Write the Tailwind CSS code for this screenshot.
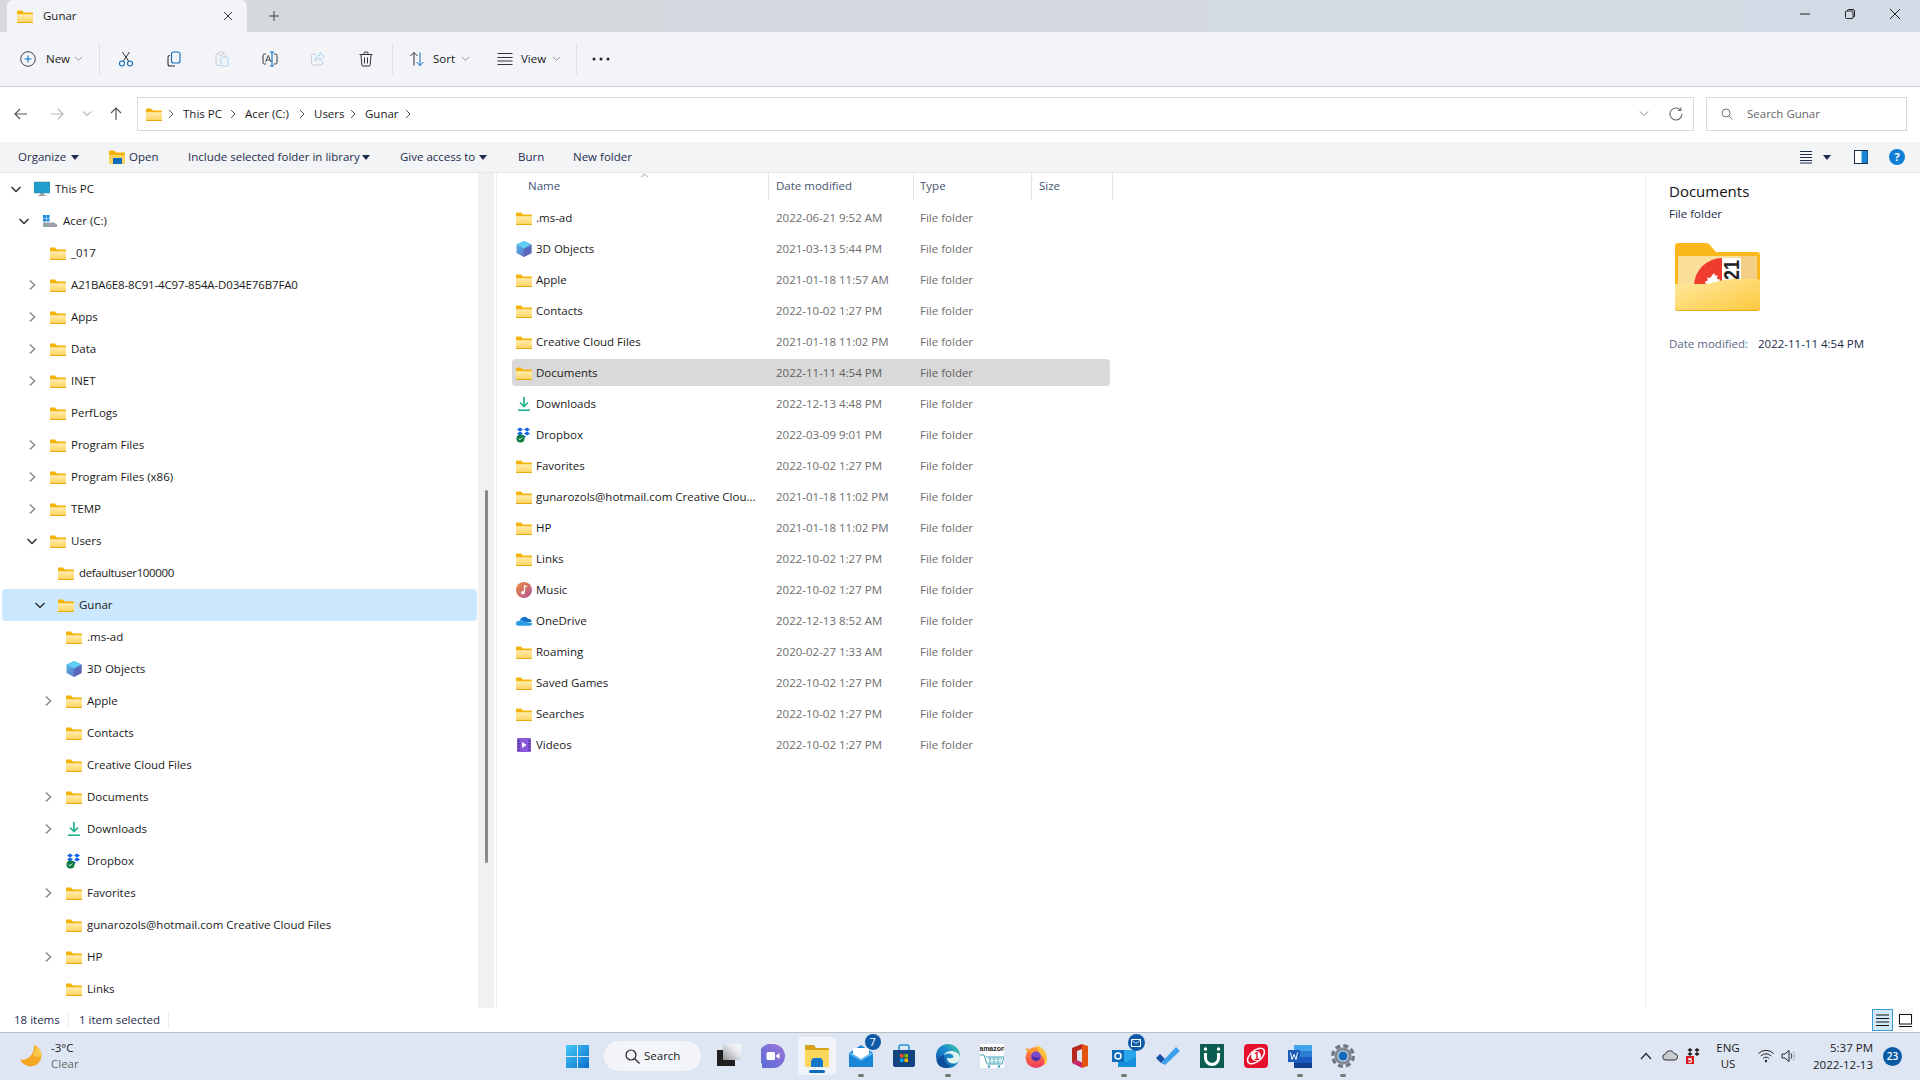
<!DOCTYPE html>
<html lang="en">
<head>
    <meta charset="UTF-8">
    <title>Gunar - File Explorer</title>
    <script src="https://cdn.jsdelivr.net/npm/@tailwindcss/browser@4"></script>
</head>
<body class="m-0 overflow-hidden bg-white">
<svg class="absolute w-0 h-0">
    <defs>
        <linearGradient id="fbody" x1="0" y1="0" x2="0" y2="1"><stop offset="0" stop-color="#ffedb0"/><stop offset="1" stop-color="#fdd35f"/></linearGradient>
        <linearGradient id="cubeg" x1="0" y1="0" x2="1" y2="1"><stop offset="0" stop-color="#4fc0ee"/><stop offset="1" stop-color="#6a5bb8"/></linearGradient>
        <linearGradient id="musicg" x1="0" y1="0" x2="1" y2="1"><stop offset="0" stop-color="#f08a3c"/><stop offset="1" stop-color="#b0569c"/></linearGradient>
        <linearGradient id="wing" x1="0" y1="0" x2="1" y2="1"><stop offset="0" stop-color="#45c8f5"/><stop offset="1" stop-color="#0a6fd0"/></linearGradient>
        <linearGradient id="edgeg" x1="0" y1="1" x2="1" y2="0"><stop offset="0" stop-color="#0c4f9c"/><stop offset=".6" stop-color="#1b8fd0"/><stop offset="1" stop-color="#4fd08a"/></linearGradient>
        <linearGradient id="foxg" x1="0" y1="0" x2="0" y2="1"><stop offset="0" stop-color="#ff9a2e"/><stop offset="1" stop-color="#f2365e"/></linearGradient>
        <linearGradient id="chatg" x1="0" y1="1" x2="1" y2="0"><stop offset="0" stop-color="#5468d8"/><stop offset="1" stop-color="#a077d6"/></linearGradient>
        <linearGradient id="tviewg" x1="0" y1="1" x2="1" y2="0"><stop offset="0" stop-color="#8f9298"/><stop offset=".6" stop-color="#e4e6ea"/><stop offset="1" stop-color="#fafbfd"/></linearGradient>
        <linearGradient id="front" x1="0" y1="0" x2="1" y2="1"><stop offset="0" stop-color="#ffe9a0"/><stop offset="1" stop-color="#fdc93f"/></linearGradient>
        <symbol id="folder" viewBox="0 0 16 16"><path d="M0 3.500a1 1 0 0 1 1-1h4l2 2h8a1 1 0 0 1 1 1v2H0z" fill="#f5b30a"/><path d="M0 6.200h16v7.300a1 1 0 0 1-1 1H1a1 1 0 0 1-1-1z" fill="url(#fbody)"/><path d="M0 14h16v.5a.5.5 0 0 1-.5.5H.5a.5.5 0 0 1-.5-.5z" fill="#e8a812"/></symbol>
        <symbol id="cube3d" viewBox="0 0 16 16"><path d="M8 0l7.500 3.500v8.500L8 16 .5 12V3.500z" fill="url(#cubeg)"/><path d="M8 7.500l7.500-4v8.500L8 16z" fill="#5a62b8" opacity=".75"/><path d="M8 0l7.500 3.500L8 7.500.5 3.500z" fill="#5fcdf2"/></symbol>
        <symbol id="download" viewBox="0 0 16 16"><path d="M8 1v9M4 6.500L8 10.500 12 6.500" fill="none" stroke="#1fb28f" stroke-width="1.700"/><path d="M2 14.200h12" stroke="#1fb28f" stroke-width="1.600"/></symbol>
        <symbol id="dropbox" viewBox="0 0 16 16"><path d="M4 .5l3 2-3 2-3-2zM11 .5l3 2-3 2-3-2zM4 4.500l3 2-3 2-3-2zM11 4.500l3 2-3 2-3-2zM7.500 8l2.500 1.700-2.500 1.700L5 9.700z" fill="#0f62e6"/><circle cx="4.500" cy="11.500" r="4" fill="#0b7a3e"/><path d="M2.700 11.500l1.300 1.300 2.300-2.300" fill="none" stroke="#fff" stroke-width="1"/></symbol>
        <symbol id="music" viewBox="0 0 16 16"><circle cx="8" cy="8" r="8" fill="url(#musicg)"/><path d="M8.500 3.500v6.800" stroke="#fff" stroke-width="1.200"/><path d="M8.500 3.500l2.500 1.200" stroke="#fff" stroke-width="1.200"/><circle cx="6.900" cy="10.800" r="1.800" fill="#fff"/></symbol>
        <symbol id="onedrive" viewBox="0 0 16 16"><path d="M4 7a4.500 4.500 0 0 1 8-1.200A3 3 0 0 1 15.500 9H6z" fill="#0f6fc6"/><path d="M0 11a2.800 2.800 0 0 1 3.500-3.200L6 6.800 10 9l6 1a2.400 2.400 0 0 1-2.300 2.800H2A2 2 0 0 1 0 11z" fill="#2b9be8"/></symbol>
        <symbol id="videos" viewBox="0 0 16 16"><rect x="1" y="1" width="14" height="14" rx="1" fill="#8b58dc"/><path d="M2 3h1.500v1.500H2zM2 6h1.500v1.500H2zM2 9h1.500v1.500H2zM2 12h1.500v1.500H2zM12.500 3H14v1.500h-1.500zM12.500 6H14v1.500h-1.500zM12.500 9H14v1.500h-1.500zM12.500 12H14v1.500h-1.500z" fill="#3f2a80"/><path d="M6 5l4.500 3L6 11z" fill="#fff"/></symbol>
        <symbol id="chev" viewBox="0 0 16 16"><path d="M6 3.500l4.500 4.500L6 12.500" fill="none" stroke="#8c8c8c" stroke-width="1.500"/></symbol>
        <symbol id="chevd" viewBox="0 0 16 16"><path d="M3.500 6L8 10.500 12.500 6" fill="none" stroke="#333" stroke-width="1.500"/></symbol>
        <symbol id="crumb" viewBox="0 0 6 10"><path d="M1 1l4 4-4 4" fill="none" stroke="#555" stroke-width="1"/></symbol>
        <symbol id="caret" viewBox="0 0 10 6"><path d="M1 .5L5 4.500 9 .5" fill="none" stroke="#8a8a8a" stroke-width="1"/></symbol>
        <symbol id="tri" viewBox="0 0 8 5"><path d="M0 0h8L4 5z" fill="#1d2c4c"/></symbol>
    </defs>
</svg>

<div class="w-[1920px] h-[1080px] flex flex-col overflow-hidden text-[11.5px] text-[#1a1a1a] font-['Open_Sans',sans-serif]">

    <!-- tabs -->
    <div class="h-8 shrink-0 flex bg-linear-to-r from-[#d6d8db] to-[#d3dbe6] pl-[7px]">
        <div class="w-[240px] h-8 bg-[#f3f4f7] rounded-t-md flex items-center pl-[10px]">
            <svg class="w-4 h-4"><use href="#folder"/></svg>
            <span class="ml-[10px] w-[179px]">Gunar</span>
            <svg class="w-3 h-3" viewBox="0 0 12 12"><path d="M2 2l8 8M10 2l-8 8" stroke="#333" stroke-width="1"/></svg>
        </div>
        <svg class="w-3 h-3 ml-[21px] mt-[10px]" viewBox="0 0 12 12"><path d="M6 1v10M1 6h10" stroke="#444" stroke-width="1"/></svg>
        <div class="ml-auto flex items-center h-7">
            <svg class="w-[10px] h-[10px]" viewBox="0 0 10 10"><path d="M0 5h10" stroke="#222" stroke-width="1"/></svg>
            <svg class="w-[10px] h-[10px] ml-[35px]" viewBox="0 0 10 10"><rect x=".5" y="2" width="7.500" height="7.500" rx="1" fill="none" stroke="#222"/><path d="M2.500 2V1.500a1 1 0 0 1 1-1H8a1.500 1.500 0 0 1 1.500 1.500v5a1 1 0 0 1-1 1H8" fill="none" stroke="#222"/></svg>
            <svg class="w-3 h-3 ml-[34px] mr-[19px]" viewBox="0 0 12 12"><path d="M1 1l10 10M11 1L1 11" stroke="#222" stroke-width="1"/></svg>
        </div>
    </div>

    <!-- toolbar -->
    <div class="h-[55px] shrink-0 bg-[#f3f4f7] border-b border-[#c9ced6] flex items-center">
        <div class="w-[99px] pl-5 flex items-center shrink-0">
            <svg class="w-4 h-4 shrink-0" viewBox="0 0 16 16"><circle cx="8" cy="8" r="7.300" fill="none" stroke="#444"/><path d="M8 4.500v7M4.500 8h7" stroke="#0f6cbd" stroke-width="1.100"/></svg>
            <span class="ml-[10px] w-[28px] shrink-0">New</span>
            <svg class="w-[9px] h-[6px] shrink-0"><use href="#caret"/></svg>
        </div>
        <div class="w-px h-8 bg-[#dcdfe4] shrink-0"></div>
        <div class="ml-[2px] w-12 flex justify-center shrink-0">
            <svg class="w-4 h-4" viewBox="0 0 16 16"><path d="M4.500 1l6.200 9.200M11.500 1L5.300 10.200" stroke="#333" stroke-width="1" fill="none"/><circle cx="4" cy="12.500" r="2.500" fill="none" stroke="#0f6cbd" stroke-width="1.100"/><circle cx="12" cy="12.500" r="2.500" fill="none" stroke="#0f6cbd" stroke-width="1.100"/></svg>
        </div>
        <div class="w-12 flex justify-center shrink-0">
            <svg class="w-4 h-4" viewBox="0 0 16 16"><rect x="5.500" y="1" width="8.500" height="11" rx="2" fill="none" stroke="#0f6cbd" stroke-width="1.100"/><path d="M4 4.500A2 2 0 0 0 2 6.500V13a2 2 0 0 0 2 2h5" fill="none" stroke="#333" stroke-width="1.100"/></svg>
        </div>
        <div class="w-12 flex justify-center shrink-0">
            <svg class="w-4 h-4" viewBox="0 0 16 16"><rect x="2" y="2.500" width="10" height="12" rx="1.500" fill="none" stroke="#c8ccd2"/><rect x="4.500" y="1" width="5" height="3" rx="1" fill="#f3f4f7" stroke="#c8ccd2"/><rect x="7" y="6" width="7" height="9" rx="1.500" fill="#f3f4f7" stroke="#a9d2ef"/></svg>
        </div>
        <div class="w-12 flex justify-center shrink-0">
            <svg class="w-4 h-4" viewBox="0 0 16 16"><path d="M4 3H2.500A1.500 1.500 0 0 0 1 4.500v7A1.500 1.500 0 0 0 2.500 13H4M12 3h1.500A1.500 1.500 0 0 1 15 4.500v7a1.500 1.500 0 0 1-1.500 1.500H12" fill="none" stroke="#333"/><path d="M10 1v14M8 1h4M8 15h4" stroke="#0f6cbd" stroke-width="1.100"/><path d="M3.500 11L6.200 4.500 9 11M4.500 9h3.500" fill="none" stroke="#333" stroke-width=".9"/></svg>
        </div>
        <div class="w-12 flex justify-center shrink-0">
            <svg class="w-4 h-4" viewBox="0 0 16 16"><path d="M6 3H3a1.500 1.500 0 0 0-1.500 1.500v8A1.500 1.500 0 0 0 3 14h8a1.500 1.500 0 0 0 1.500-1.500V10" fill="none" stroke="#c8ccd2"/><path d="M10 1.500l4.500 4L10 9.500V7.300C7.500 7.300 6 8 5 10c0-3.500 2-5.700 5-5.800z" fill="none" stroke="#a9d2ef"/></svg>
        </div>
        <div class="w-12 flex justify-center shrink-0">
            <svg class="w-4 h-4" viewBox="0 0 16 16"><path d="M1.500 3.500h13M6 3.500V2a1 1 0 0 1 1-1h2a1 1 0 0 1 1 1v1.500M3 3.500l.8 10.500a1 1 0 0 0 1 1h6.400a1 1 0 0 0 1-1L13 3.500M6.500 6.500v6M9.500 6.500v6" fill="none" stroke="#333" stroke-width="1"/></svg>
        </div>
        <div class="ml-[2px] w-px h-8 bg-[#dcdfe4] shrink-0"></div>
        <svg class="ml-[16px] w-4 h-4 shrink-0" viewBox="0 0 16 16"><path d="M5 14.500V1.500M1.500 5L5 1.500 8.500 5" fill="none" stroke="#333"/><path d="M11 1.500v13M7.500 11l3.500 3.500 3.500-3.500" fill="none" stroke="#0f6cbd"/></svg>
        <span class="ml-2 w-[28px] shrink-0">Sort</span>
        <svg class="w-[9px] h-[6px] shrink-0"><use href="#caret"/></svg>
        <svg class="ml-[27px] w-4 h-4 shrink-0" viewBox="0 0 16 16"><path d="M.5 2.500h15M.5 6.500h15M.5 10h15M.5 13.500h15" stroke="#333" stroke-width="1"/></svg>
        <span class="ml-2 w-[31px] shrink-0">View</span>
        <svg class="w-[9px] h-[6px] shrink-0"><use href="#caret"/></svg>
        <div class="ml-[15px] w-px h-8 bg-[#dcdfe4] shrink-0"></div>
        <svg class="ml-[15px] w-[18px] h-1 shrink-0" viewBox="0 0 18 4"><circle cx="2" cy="2" r="1.500" fill="#222"/><circle cx="9" cy="2" r="1.500" fill="#222"/><circle cx="16" cy="2" r="1.500" fill="#222"/></svg>
    </div>

    <!-- address row -->
    <div class="h-[55px] shrink-0 flex items-center pl-[14px] pb-[1px]">
        <svg class="w-[14px] h-[14px] shrink-0" viewBox="0 0 14 14"><path d="M13 7H1M6 2L1 7l5 5" fill="none" stroke="#555" stroke-width="1.200"/></svg>
        <svg class="ml-[22px] w-[14px] h-[14px] shrink-0" viewBox="0 0 14 14"><path d="M1 7h12M8 2l5 5-5 5" fill="none" stroke="#b5b5b5" stroke-width="1.200"/></svg>
        <svg class="ml-[18px] w-[10px] h-[6px] shrink-0"><use href="#caret"/></svg>
        <svg class="ml-[17px] w-[14px] h-[14px] shrink-0" viewBox="0 0 14 14"><path d="M7 13V1M2 6l5-5 5 5" fill="none" stroke="#555" stroke-width="1.200"/></svg>
        <div class="ml-[14px] w-[1557px] h-[34px] shrink-0 border border-[#d9d9d9] flex items-center pl-2">
            <svg class="w-4 h-4 shrink-0"><use href="#folder"/></svg>
            <svg class="ml-[6px] w-[6px] h-[10px] shrink-0"><use href="#crumb"/></svg>
            <span class="ml-[9px] w-[47px] shrink-0">This PC</span>
            <svg class="w-[6px] h-[10px] shrink-0"><use href="#crumb"/></svg>
            <span class="ml-[9px] w-[54px] shrink-0">Acer (C:)</span>
            <svg class="w-[6px] h-[10px] shrink-0"><use href="#crumb"/></svg>
            <span class="ml-[9px] w-[36px] shrink-0">Users</span>
            <svg class="w-[6px] h-[10px] shrink-0"><use href="#crumb"/></svg>
            <span class="ml-[9px] w-[40px] shrink-0">Gunar</span>
            <svg class="w-[6px] h-[10px] shrink-0"><use href="#crumb"/></svg>
            <svg class="ml-auto w-[10px] h-[6px] shrink-0"><use href="#caret"/></svg>
            <svg class="ml-5 mr-[10px] w-[14px] h-[14px] shrink-0" viewBox="0 0 14 14"><path d="M11.500 3A6 6 0 1 0 13 7" fill="none" stroke="#666" stroke-width="1.100"/><path d="M11.800.5v3h-3" fill="none" stroke="#666" stroke-width="1.100"/></svg>
        </div>
        <div class="ml-[12px] w-[201px] h-[34px] shrink-0 border border-[#d9d9d9] flex items-center pl-[14px] text-[#666]">
            <svg class="w-3 h-3 shrink-0" viewBox="0 0 12 12"><circle cx="5" cy="5" r="4" fill="none" stroke="#777"/><path d="M8 8l3.500 3.500" stroke="#777"/></svg>
            <span class="ml-[14px]">Search Gunar</span>
        </div>
    </div>

    <!-- command bar -->
    <div class="h-[31px] shrink-0 bg-[#f3f4f6] border-b border-[#e6e8eb] flex items-center pl-[18px] text-[#1d2c4c]">
        <span class="w-[53px] shrink-0">Organize</span>
        <svg class="w-2 h-[5px] shrink-0"><use href="#tri"/></svg>
        <svg class="ml-[30px] w-4 h-4 shrink-0" viewBox="0 0 16 16"><path d="M0 2.500a1 1 0 0 1 1-1h4l2 2h8a1 1 0 0 1 1 1v2H0z" fill="#f5b30a"/><path d="M0 6h16v9H0z" fill="#fdd35f"/><rect x="4" y="9" width="9" height="6" fill="#0f6cbd"/></svg>
        <span class="ml-1 w-[28px] shrink-0">Open</span>
        <span class="ml-[31px] w-[174px] shrink-0">Include selected folder in library</span>
        <svg class="w-2 h-[5px] shrink-0"><use href="#tri"/></svg>
        <span class="ml-[30px] w-[79px] shrink-0">Give access to</span>
        <svg class="w-2 h-[5px] shrink-0"><use href="#tri"/></svg>
        <span class="ml-[31px] w-[26px] shrink-0">Burn</span>
        <span class="ml-[29px] shrink-0">New folder</span>
        <svg class="ml-auto w-[14px] h-[14px] shrink-0" viewBox="0 0 14 14"><path d="M1 1.500h12M1 4.500h12M1 7.500h12M1 10.500h12M1 13h12" stroke="#1d2c4c"/></svg>
        <svg class="ml-[10px] w-2 h-[5px] shrink-0"><use href="#tri"/></svg>
        <svg class="ml-[23px] w-[14px] h-[14px] shrink-0" viewBox="0 0 14 14"><rect x=".5" y=".5" width="13" height="13" fill="#fff" stroke="#1d2c4c"/><rect x="7.500" y="1" width="6" height="12" fill="#1a86d8"/></svg>
        <div class="ml-[21px] mr-[15px] w-4 h-4 rounded-full bg-[#0f7fd6] text-white text-[11px] font-bold flex items-center justify-center shrink-0">?</div>
    </div>

    <!-- main -->
    <div class="flex-1 min-h-0 flex">
        <!-- tree -->
        <div class="w-[478px] shrink-0 flex flex-col overflow-hidden">
            <div class="flex items-center h-8 shrink-0 pl-[8px]"><svg class="w-4 h-4 shrink-0"><use href="#chevd"/></svg><svg class="ml-[10px] w-4 h-4 shrink-0" viewBox="0 0 16 16"><rect x="0" y="1" width="16" height="11" fill="#1f9ecb" stroke="#3a7f9a" stroke-width=".5"/><path d="M6 12h4v2H6zM4 14h8v1H4z" fill="#9aa3aa"/></svg><span class="ml-[5px]">This PC</span></div>
            <div class="flex items-center h-8 shrink-0 pl-[16px]"><svg class="w-4 h-4 shrink-0"><use href="#chevd"/></svg><svg class="ml-[10px] w-4 h-4 shrink-0" viewBox="0 0 16 16"><path d="M1 2h3v3H1zM4.500 2h3v3h-3zM1 5.500h3v3H1zM4.500 5.500h3v3h-3z" fill="#1a86d8"/><path d="M1 9.500h11l3 2v2.500H1z" fill="#9ba1a6"/><path d="M3 12h1.500v1H3z" fill="#3dd13d"/></svg><span class="ml-[5px]">Acer (C:)</span></div>
            <div class="flex items-center h-8 shrink-0 pl-[50px]"><svg class="w-4 h-4 shrink-0"><use href="#folder"/></svg><span class="ml-[5px]">_017</span></div>
            <div class="flex items-center h-8 shrink-0 pl-[24px]"><svg class="w-4 h-4 shrink-0"><use href="#chev"/></svg><svg class="ml-[10px] w-4 h-4 shrink-0"><use href="#folder"/></svg><span class="ml-[5px] tracking-[-0.14px]">A21BA6E8-8C91-4C97-854A-D034E76B7FA0</span></div>
            <div class="flex items-center h-8 shrink-0 pl-[24px]"><svg class="w-4 h-4 shrink-0"><use href="#chev"/></svg><svg class="ml-[10px] w-4 h-4 shrink-0"><use href="#folder"/></svg><span class="ml-[5px]">Apps</span></div>
            <div class="flex items-center h-8 shrink-0 pl-[24px]"><svg class="w-4 h-4 shrink-0"><use href="#chev"/></svg><svg class="ml-[10px] w-4 h-4 shrink-0"><use href="#folder"/></svg><span class="ml-[5px]">Data</span></div>
            <div class="flex items-center h-8 shrink-0 pl-[24px]"><svg class="w-4 h-4 shrink-0"><use href="#chev"/></svg><svg class="ml-[10px] w-4 h-4 shrink-0"><use href="#folder"/></svg><span class="ml-[5px]">INET</span></div>
            <div class="flex items-center h-8 shrink-0 pl-[50px]"><svg class="w-4 h-4 shrink-0"><use href="#folder"/></svg><span class="ml-[5px]">PerfLogs</span></div>
            <div class="flex items-center h-8 shrink-0 pl-[24px]"><svg class="w-4 h-4 shrink-0"><use href="#chev"/></svg><svg class="ml-[10px] w-4 h-4 shrink-0"><use href="#folder"/></svg><span class="ml-[5px]">Program Files</span></div>
            <div class="flex items-center h-8 shrink-0 pl-[24px]"><svg class="w-4 h-4 shrink-0"><use href="#chev"/></svg><svg class="ml-[10px] w-4 h-4 shrink-0"><use href="#folder"/></svg><span class="ml-[5px]">Program Files (x86)</span></div>
            <div class="flex items-center h-8 shrink-0 pl-[24px]"><svg class="w-4 h-4 shrink-0"><use href="#chev"/></svg><svg class="ml-[10px] w-4 h-4 shrink-0"><use href="#folder"/></svg><span class="ml-[5px]">TEMP</span></div>
            <div class="flex items-center h-8 shrink-0 pl-[24px]"><svg class="w-4 h-4 shrink-0"><use href="#chevd"/></svg><svg class="ml-[10px] w-4 h-4 shrink-0"><use href="#folder"/></svg><span class="ml-[5px]">Users</span></div>
            <div class="flex items-center h-8 shrink-0 pl-[58px]"><svg class="w-4 h-4 shrink-0"><use href="#folder"/></svg><span class="ml-[5px] tracking-[-0.35px]">defaultuser100000</span></div>
            <div class="flex items-center h-8 shrink-0 ml-[2px] pl-[30px] w-[475px] bg-[#cce8ff] rounded-sm"><svg class="w-4 h-4 shrink-0"><use href="#chevd"/></svg><svg class="ml-[10px] w-4 h-4 shrink-0"><use href="#folder"/></svg><span class="ml-[5px]">Gunar</span></div>
            <div class="flex items-center h-8 shrink-0 pl-[66px]"><svg class="w-4 h-4 shrink-0"><use href="#folder"/></svg><span class="ml-[5px]">.ms-ad</span></div>
            <div class="flex items-center h-8 shrink-0 pl-[66px]"><svg class="w-4 h-4 shrink-0"><use href="#cube3d"/></svg><span class="ml-[5px]">3D Objects</span></div>
            <div class="flex items-center h-8 shrink-0 pl-[40px]"><svg class="w-4 h-4 shrink-0"><use href="#chev"/></svg><svg class="ml-[10px] w-4 h-4 shrink-0"><use href="#folder"/></svg><span class="ml-[5px]">Apple</span></div>
            <div class="flex items-center h-8 shrink-0 pl-[66px]"><svg class="w-4 h-4 shrink-0"><use href="#folder"/></svg><span class="ml-[5px]">Contacts</span></div>
            <div class="flex items-center h-8 shrink-0 pl-[66px]"><svg class="w-4 h-4 shrink-0"><use href="#folder"/></svg><span class="ml-[5px]">Creative Cloud Files</span></div>
            <div class="flex items-center h-8 shrink-0 pl-[40px]"><svg class="w-4 h-4 shrink-0"><use href="#chev"/></svg><svg class="ml-[10px] w-4 h-4 shrink-0"><use href="#folder"/></svg><span class="ml-[5px]">Documents</span></div>
            <div class="flex items-center h-8 shrink-0 pl-[40px]"><svg class="w-4 h-4 shrink-0"><use href="#chev"/></svg><svg class="ml-[10px] w-4 h-4 shrink-0"><use href="#download"/></svg><span class="ml-[5px]">Downloads</span></div>
            <div class="flex items-center h-8 shrink-0 pl-[66px]"><svg class="w-4 h-4 shrink-0"><use href="#dropbox"/></svg><span class="ml-[5px]">Dropbox</span></div>
            <div class="flex items-center h-8 shrink-0 pl-[40px]"><svg class="w-4 h-4 shrink-0"><use href="#chev"/></svg><svg class="ml-[10px] w-4 h-4 shrink-0"><use href="#folder"/></svg><span class="ml-[5px]">Favorites</span></div>
            <div class="flex items-center h-8 shrink-0 pl-[66px]"><svg class="w-4 h-4 shrink-0"><use href="#folder"/></svg><span class="ml-[5px]">gunarozols@hotmail.com Creative Cloud Files</span></div>
            <div class="flex items-center h-8 shrink-0 pl-[40px]"><svg class="w-4 h-4 shrink-0"><use href="#chev"/></svg><svg class="ml-[10px] w-4 h-4 shrink-0"><use href="#folder"/></svg><span class="ml-[5px]">HP</span></div>
            <div class="flex items-center h-8 shrink-0 pl-[66px]"><svg class="w-4 h-4 shrink-0"><use href="#folder"/></svg><span class="ml-[5px]">Links</span></div>
        </div>

        <!-- tree scrollbar -->
        <div class="w-4 shrink-0 bg-[#f1f1f1] pt-[317px] flex justify-center">
            <div class="w-[3px] h-[373px] rounded-full bg-[#8a8a8a]"></div>
        </div>

        <!-- file list -->
        <div class="flex-1 min-w-0 ml-[2px] border-l border-[#ececec] pl-[15px] flex flex-col gap-[4px]">
            <div class="h-[27px] shrink-0 flex text-[#44546f]">
                <div class="relative w-[257px] border-r border-[#e5e5e5] pl-4 pb-[2px] flex items-center">Name
                    <svg class="absolute left-[128px] top-0 w-[9px] h-[5px]" viewBox="0 0 10 6"><path d="M1 5l4-4 4 4" fill="none" stroke="#888"/></svg>
                </div>
                <div class="w-[145px] border-r border-[#e5e5e5] pl-[7px] pb-[2px] flex items-center">Date modified</div>
                <div class="w-[118px] border-r border-[#e5e5e5] pl-[6px] pb-[2px] flex items-center">Type</div>
                <div class="w-[81px] border-r border-[#e5e5e5] pl-[7px] pb-[2px] flex items-center">Size</div>
            </div>
            <div class="w-[598px] h-[27px] shrink-0 flex items-center pl-1"><svg class="w-4 h-4 shrink-0"><use href="#folder"/></svg><span class="ml-1 w-[240px] shrink-0">.ms-ad</span><span class="w-[144px] shrink-0 text-[#6d6d6d]">2022-06-21 9:52 AM</span><span class="text-[#6d6d6d]">File folder</span></div>
            <div class="w-[598px] h-[27px] shrink-0 flex items-center pl-1"><svg class="w-4 h-4 shrink-0"><use href="#cube3d"/></svg><span class="ml-1 w-[240px] shrink-0">3D Objects</span><span class="w-[144px] shrink-0 text-[#6d6d6d]">2021-03-13 5:44 PM</span><span class="text-[#6d6d6d]">File folder</span></div>
            <div class="w-[598px] h-[27px] shrink-0 flex items-center pl-1"><svg class="w-4 h-4 shrink-0"><use href="#folder"/></svg><span class="ml-1 w-[240px] shrink-0">Apple</span><span class="w-[144px] shrink-0 text-[#6d6d6d]">2021-01-18 11:57 AM</span><span class="text-[#6d6d6d]">File folder</span></div>
            <div class="w-[598px] h-[27px] shrink-0 flex items-center pl-1"><svg class="w-4 h-4 shrink-0"><use href="#folder"/></svg><span class="ml-1 w-[240px] shrink-0">Contacts</span><span class="w-[144px] shrink-0 text-[#6d6d6d]">2022-10-02 1:27 PM</span><span class="text-[#6d6d6d]">File folder</span></div>
            <div class="w-[598px] h-[27px] shrink-0 flex items-center pl-1"><svg class="w-4 h-4 shrink-0"><use href="#folder"/></svg><span class="ml-1 w-[240px] shrink-0">Creative Cloud Files</span><span class="w-[144px] shrink-0 text-[#6d6d6d]">2021-01-18 11:02 PM</span><span class="text-[#6d6d6d]">File folder</span></div>
            <div class="w-[598px] h-[27px] shrink-0 flex items-center pl-1 bg-[#d9d9d9] rounded-sm"><svg class="w-4 h-4 shrink-0"><use href="#folder"/></svg><span class="ml-1 w-[240px] shrink-0">Documents</span><span class="w-[144px] shrink-0 text-[#5f5f5f]">2022-11-11 4:54 PM</span><span class="text-[#5f5f5f]">File folder</span></div>
            <div class="w-[598px] h-[27px] shrink-0 flex items-center pl-1"><svg class="w-4 h-4 shrink-0"><use href="#download"/></svg><span class="ml-1 w-[240px] shrink-0">Downloads</span><span class="w-[144px] shrink-0 text-[#6d6d6d]">2022-12-13 4:48 PM</span><span class="text-[#6d6d6d]">File folder</span></div>
            <div class="w-[598px] h-[27px] shrink-0 flex items-center pl-1"><svg class="w-4 h-4 shrink-0"><use href="#dropbox"/></svg><span class="ml-1 w-[240px] shrink-0">Dropbox</span><span class="w-[144px] shrink-0 text-[#6d6d6d]">2022-03-09 9:01 PM</span><span class="text-[#6d6d6d]">File folder</span></div>
            <div class="w-[598px] h-[27px] shrink-0 flex items-center pl-1"><svg class="w-4 h-4 shrink-0"><use href="#folder"/></svg><span class="ml-1 w-[240px] shrink-0">Favorites</span><span class="w-[144px] shrink-0 text-[#6d6d6d]">2022-10-02 1:27 PM</span><span class="text-[#6d6d6d]">File folder</span></div>
            <div class="w-[598px] h-[27px] shrink-0 flex items-center pl-1"><svg class="w-4 h-4 shrink-0"><use href="#folder"/></svg><span class="ml-1 w-[240px] shrink-0 whitespace-nowrap overflow-hidden">gunarozols@hotmail.com Creative Clou...</span><span class="w-[144px] shrink-0 text-[#6d6d6d]">2021-01-18 11:02 PM</span><span class="text-[#6d6d6d]">File folder</span></div>
            <div class="w-[598px] h-[27px] shrink-0 flex items-center pl-1"><svg class="w-4 h-4 shrink-0"><use href="#folder"/></svg><span class="ml-1 w-[240px] shrink-0">HP</span><span class="w-[144px] shrink-0 text-[#6d6d6d]">2021-01-18 11:02 PM</span><span class="text-[#6d6d6d]">File folder</span></div>
            <div class="w-[598px] h-[27px] shrink-0 flex items-center pl-1"><svg class="w-4 h-4 shrink-0"><use href="#folder"/></svg><span class="ml-1 w-[240px] shrink-0">Links</span><span class="w-[144px] shrink-0 text-[#6d6d6d]">2022-10-02 1:27 PM</span><span class="text-[#6d6d6d]">File folder</span></div>
            <div class="w-[598px] h-[27px] shrink-0 flex items-center pl-1"><svg class="w-4 h-4 shrink-0"><use href="#music"/></svg><span class="ml-1 w-[240px] shrink-0">Music</span><span class="w-[144px] shrink-0 text-[#6d6d6d]">2022-10-02 1:27 PM</span><span class="text-[#6d6d6d]">File folder</span></div>
            <div class="w-[598px] h-[27px] shrink-0 flex items-center pl-1"><svg class="w-4 h-4 shrink-0"><use href="#onedrive"/></svg><span class="ml-1 w-[240px] shrink-0">OneDrive</span><span class="w-[144px] shrink-0 text-[#6d6d6d]">2022-12-13 8:52 AM</span><span class="text-[#6d6d6d]">File folder</span></div>
            <div class="w-[598px] h-[27px] shrink-0 flex items-center pl-1"><svg class="w-4 h-4 shrink-0"><use href="#folder"/></svg><span class="ml-1 w-[240px] shrink-0">Roaming</span><span class="w-[144px] shrink-0 text-[#6d6d6d]">2020-02-27 1:33 AM</span><span class="text-[#6d6d6d]">File folder</span></div>
            <div class="w-[598px] h-[27px] shrink-0 flex items-center pl-1"><svg class="w-4 h-4 shrink-0"><use href="#folder"/></svg><span class="ml-1 w-[240px] shrink-0">Saved Games</span><span class="w-[144px] shrink-0 text-[#6d6d6d]">2022-10-02 1:27 PM</span><span class="text-[#6d6d6d]">File folder</span></div>
            <div class="w-[598px] h-[27px] shrink-0 flex items-center pl-1"><svg class="w-4 h-4 shrink-0"><use href="#folder"/></svg><span class="ml-1 w-[240px] shrink-0">Searches</span><span class="w-[144px] shrink-0 text-[#6d6d6d]">2022-10-02 1:27 PM</span><span class="text-[#6d6d6d]">File folder</span></div>
            <div class="w-[598px] h-[27px] shrink-0 flex items-center pl-1"><svg class="w-4 h-4 shrink-0"><use href="#videos"/></svg><span class="ml-1 w-[240px] shrink-0">Videos</span><span class="w-[144px] shrink-0 text-[#6d6d6d]">2022-10-02 1:27 PM</span><span class="text-[#6d6d6d]">File folder</span></div>
        </div>

        <!-- preview pane -->
        <div class="w-[275px] shrink-0 border-l border-[#f0f0f0] pl-[23px] pt-[8px] flex flex-col">
            <div class="text-[15px] leading-[21px] text-[#111]">Documents</div>
            <div class="mt-[3px] leading-[18px] text-[#1d2c4c]">File folder</div>
            <svg class="ml-[6px] mt-[20px] w-[85px] h-[68px]" viewBox="0 0 85 68">
                <path d="M0 3a3 3 0 0 1 3-3h28a6 6 0 0 1 4 2l6 7h41a3 3 0 0 1 3 3v30H0z" fill="#fbb81c"/>
                <rect x="3" y="13" width="79" height="36" rx="1" fill="#fadf9a"/>
                <path d="M66 13h16v36H66z" fill="#f3cf85"/>
                <path d="M47 15A28 28 0 0 0 19 43v6h28z" fill="#ee3d2c"/>
                <path d="M39 30l1.500 3 2-1-.5 4 3 .5-1.500 5H31l-1-3 3-1-1-3 3 .5z" fill="#fff"/>
                <rect x="47" y="15" width="19" height="34" fill="#fff"/>
                <text transform="translate(64 37) rotate(-90)" font-family="Liberation Sans, sans-serif" font-weight="700" font-size="22" textLength="20" lengthAdjust="spacingAndGlyphs" fill="#222">21</text>
                <path d="M0 41h26c8 0 12-1 18-3 4-1 8-2 14-2h24a3 3 0 0 1 3 3v26a3 3 0 0 1-3 3H3a3 3 0 0 1-3-3z" fill="url(#front)"/>
                <path d="M0 64a3 3 0 0 0 3 3h79a3 3 0 0 0 3-3v1a3 3 0 0 1-3 3H3a3 3 0 0 1-3-3z" fill="#e8a812"/>
            </svg>
            <div class="mt-[24px] flex items-center h-[18px]">
                <span class="w-[89px] text-[#5a6a85]">Date modified:</span>
                <span class="text-[#1d2c4c]">2022-11-11 4:54 PM</span>
            </div>
        </div>
    </div>

    <!-- status bar -->
    <div class="h-6 shrink-0 flex items-center pl-[14px] text-[#1d2c4c]">
        <span class="w-[54px] shrink-0">18 items</span>
        <div class="w-px h-[18px] bg-[#ececec] shrink-0"></div>
        <span class="ml-[10px] w-[89px] shrink-0">1 item selected</span>
        <div class="w-px h-[18px] bg-[#ececec] shrink-0"></div>
        <div class="ml-auto w-[21px] h-[22px] border border-[#38a0d8] bg-[#d3e8f7] flex items-center justify-center shrink-0">
            <svg class="w-[13px] h-[13px]" viewBox="0 0 13 13"><path d="M0 1h13M0 4.500h13M0 8h13M0 11.500h13" stroke="#111"/></svg>
        </div>
        <div class="ml-[5px] mr-[7px] w-[15px] h-[22px] bg-[#f4f4f4] flex items-center justify-center shrink-0">
            <svg class="w-[13px] h-[13px]" viewBox="0 0 13 13"><rect x=".5" y=".5" width="12" height="9.500" fill="#fff" stroke="#111"/><path d="M0 12.500h13" stroke="#111"/></svg>
        </div>
    </div>

    <!-- taskbar -->
    <div class="h-12 shrink-0 bg-[#dfe6f3] border-t border-[#b9bdc4] pb-[1px] flex items-center">
        <div class="w-[566px] shrink-0 pl-5 flex items-center">
            <svg class="w-[22px] h-[22px]" viewBox="0 0 22 22"><path d="M14 0a11 11 0 1 1-14 14C6 17 15 10 14 0z" fill="#f5a623"/><path d="M16 1.500c4 2 6 6 5.500 10-5 1-8 0-8.500-1 1.500-3 2.500-6 3-9z" fill="#f7c64a"/></svg>
            <div class="ml-[9px] flex flex-col text-[11.5px] leading-[16px]">
                <span>-3°C</span>
                <span class="text-[#666]">Clear</span>
            </div>
        </div>
        <svg class="w-[23px] h-[23px] shrink-0" viewBox="0 0 23 23"><path d="M0 0h11v11H0zM12 0h11v11H12zM0 12h11v11H0zM12 12h11v11H12z" fill="url(#wing)"/></svg>
        <div class="ml-[15px] w-[97px] h-[30px] rounded-full bg-[#f3f5fa] shrink-0 flex items-center pl-[21px]">
            <svg class="w-[15px] h-[15px] shrink-0" viewBox="0 0 15 15"><circle cx="6" cy="6" r="5" fill="none" stroke="#222" stroke-width="1.200"/><path d="M9.500 9.500l5 5" stroke="#222" stroke-width="1.300"/></svg>
            <span class="ml-1">Search</span>
        </div>

        <div class="ml-[6px] flex items-center shrink-0">
            <!-- task view -->
            <div class="w-[43.900px] h-[38px] flex items-center justify-center">
                <svg class="w-6 h-6" viewBox="0 0 24 24"><rect x="0" y="6" width="18" height="16" fill="#1f1f1f"/><rect x="6" y="0" width="18" height="16" fill="url(#tviewg)"/></svg>
            </div>
            <!-- chat -->
            <div class="w-[43.900px] h-[38px] flex items-center justify-center">
                <svg class="w-6 h-6" viewBox="0 0 24 24"><path d="M12 0a12 12 0 0 1 0 24H2a1 1 0 0 1-1-1v-3A12 12 0 0 1 12 0z" fill="url(#chatg)"/><rect x="5.500" y="8" width="8.500" height="8" rx="1.500" fill="#fff"/><path d="M15 11.500l3.500-2.500v6L15 12.500z" fill="#fff"/></svg>
            </div>
            <!-- explorer -->
            <div class="relative w-[38px] h-[38px] mx-[2.950px] rounded bg-[#f0f3f9] flex items-center justify-center">
                <svg class="w-6 h-[22px]" viewBox="0 0 24 22"><path d="M0 1a1 1 0 0 1 1-1h8l2 3h12a1 1 0 0 1 1 1v4H0z" fill="#d9a21b"/><path d="M0 5h24v16a1 1 0 0 1-1 1H1a1 1 0 0 1-1-1z" fill="#fbd75d"/><path d="M6 16l2-3h8l2 3v6H6z" fill="#1277c9"/></svg>
                <div class="absolute bottom-[2px] left-[11px] w-4 h-[3px] rounded-full bg-[#0f6cbd]"></div>
            </div>
            <!-- mail -->
            <div class="relative w-[43.900px] h-[38px] flex items-center justify-center">
                <svg class="w-6 h-6" viewBox="0 0 24 24"><path d="M0 9l12-8 12 8v14H0z" fill="#1a86d8"/><path d="M0 9h24v1L12 17 0 10z" fill="#5ab7f0"/><path d="M4 4h16v6l-8 5-8-5z" fill="#fff"/></svg>
                <div class="absolute right-[2px] top-[-3px] w-[16px] h-[16px] rounded-full bg-[#0f5aa8] text-white text-[11px] flex items-center justify-center">7</div>
                <div class="absolute bottom-[-2px] left-[19px] w-[6px] h-[3px] rounded-full bg-[#777]"></div>
            </div>
            <!-- store -->
            <div class="w-[43.900px] h-[38px] flex items-center justify-center">
                <svg class="w-6 h-6" viewBox="0 0 24 24"><path d="M7 6V3a2 2 0 0 1 2-2h6a2 2 0 0 1 2 2v3" fill="none" stroke="#2a8fd8" stroke-width="1.500"/><path d="M1 6h22v15a2 2 0 0 1-2 2H3a2 2 0 0 1-2-2z" fill="#12457e"/><path d="M8 10h3.500v3.500H8z" fill="#f25022"/><path d="M12.500 10H16v3.500h-3.500z" fill="#7fba00"/><path d="M8 14.500h3.500V18H8z" fill="#00a4ef"/><path d="M12.500 14.500H16V18h-3.500z" fill="#ffb900"/></svg>
            </div>
            <!-- edge -->
            <div class="relative w-[43.900px] h-[38px] flex items-center justify-center">
                <svg class="w-6 h-6" viewBox="0 0 24 24"><circle cx="12" cy="12" r="12" fill="url(#edgeg)"/><path d="M24 14c0-5-5-7-9-7-3 0-6 1.500-7 4 2-1.500 5-2 7-1 2 .5 3 2 2 3.500-1 1-5 1-6 0 0 3 2 6 6 6 4 0 7-2 7-5.500z" fill="#dff3ec"/><path d="M8 11c0 5 2 9 6 11-1 .5-2 2-4 2C5 24 1 21 .5 16 3 13 5 12 8 11z" fill="#0c4f9c"/></svg>
                <div class="absolute bottom-[-2px] left-[19px] w-[6px] h-[3px] rounded-full bg-[#777]"></div>
            </div>
            <!-- amazon -->
            <div class="w-[43.900px] h-[38px] flex items-center justify-center">
                <div class="w-6 h-6 bg-white flex flex-col items-center overflow-hidden">
                    <span class="text-[7px] leading-[10px] font-bold text-[#222] font-['Liberation_Sans',sans-serif]">amazon</span>
                    <svg class="w-6 h-[14px]" viewBox="0 0 24 14"><path d="M0 1h4l3 9h15l2-7H6" fill="#fff" stroke="#3fa3b8" stroke-width="1"/><path d="M8 5h14M9 8h12M10 3v7M14 3v7M18 3v7" stroke="#3fa3b8" stroke-width=".7"/><circle cx="9" cy="12.500" r="1.200" fill="#3fa3b8"/><circle cx="19" cy="12.500" r="1.200" fill="#3fa3b8"/></svg>
                </div>
            </div>
            <!-- firefox -->
            <div class="w-[43.900px] h-[38px] flex items-center justify-center">
                <svg class="w-6 h-6" viewBox="0 0 24 24"><circle cx="12" cy="13.500" r="10.500" fill="url(#foxg)"/><path d="M13 0c2 3 9 5 10 13 .5 4-1 7-3 9 1-5 0-9-3-11-2-2-4-5-4-11z" fill="#ffc13d"/><path d="M3 7c-1-1-1-2-.5-3.500C4 5 5 6 7 6c2-1 4-1 6 0-3 0-5 2-5 3z" fill="#ff9a2e"/><circle cx="12" cy="12.500" r="5" fill="#7b4bc9"/><path d="M8 12a4 4 0 0 0 8 1c-1 1-5 1-8-1z" fill="#4d2a9a"/></svg>
            </div>
            <!-- office -->
            <div class="w-[43.900px] h-[38px] flex items-center justify-center">
                <svg class="w-[18px] h-6" viewBox="0 0 18 24"><path d="M1 4l10-4v5L6 7v9l-5 3z" fill="#b7281f"/><path d="M11 0l6 2v20l-6 2V5z" fill="#e2540f"/><path d="M1 19l5-3 5 2.500V24z" fill="#c4276b"/></svg>
            </div>
            <!-- outlook -->
            <div class="relative w-[43.900px] h-[38px] flex items-center justify-center">
                <svg class="w-6 h-6" viewBox="0 0 24 24"><path d="M6 6h18v17H6z" fill="#28a8ea"/><path d="M6 14l8 4 10-5v10H6z" fill="#1490df"/><rect x="0" y="6" width="12" height="12" fill="#0f6cbd"/><circle cx="6" cy="12" r="3" fill="none" stroke="#fff" stroke-width="1.500"/></svg>
                <div class="absolute right-[1px] top-[-3px] w-[17px] h-[17px] rounded-full bg-[#0f5aa8] flex items-center justify-center">
                    <svg class="w-[10px] h-2" viewBox="0 0 10 8"><rect x=".5" y=".5" width="9" height="7" fill="none" stroke="#fff"/><path d="M.5 1L5 4.500 9.500 1" fill="none" stroke="#fff" stroke-width=".8"/></svg>
                </div>
                <div class="absolute bottom-[-2px] left-[19px] w-[6px] h-[3px] rounded-full bg-[#777]"></div>
            </div>
            <!-- todo -->
            <div class="w-[43.900px] h-[38px] flex items-center justify-center">
                <svg class="w-6 h-6" viewBox="0 0 24 24"><path d="M0 14l4-4 5 5-4 4z" fill="#1a4fa8"/><path d="M9 21l-4-2L20 3l4 4z" fill="#3da0ec"/></svg>
            </div>
            <!-- magnet app -->
            <div class="w-[43.900px] h-[38px] flex items-center justify-center">
                <svg class="w-6 h-6" viewBox="0 0 24 24"><rect width="24" height="24" fill="#0c5c52"/><path d="M5.500 9v5a6.500 6.500 0 0 0 13 0V9" fill="none" stroke="#fff" stroke-width="3"/><circle cx="5.500" cy="5" r="1.700" fill="#fff"/><circle cx="18.500" cy="5" r="1.700" fill="#fff"/></svg>
            </div>
            <!-- red app -->
            <div class="w-[43.900px] h-[38px] flex items-center justify-center">
                <svg class="w-6 h-6" viewBox="0 0 24 24"><rect width="24" height="24" rx="4" fill="#e5112d"/><ellipse cx="12" cy="12" rx="10" ry="5.500" transform="rotate(-40 12 12)" fill="none" stroke="#fff" stroke-width="1.500"/><ellipse cx="12" cy="12" rx="5" ry="5" fill="#fff"/><text x="10" y="16" font-size="10" font-weight="700" fill="#e5112d" font-family="Liberation Sans, sans-serif">1</text></svg>
            </div>
            <!-- word -->
            <div class="relative w-[43.900px] h-[38px] flex items-center justify-center">
                <svg class="w-6 h-6" viewBox="0 0 24 24"><rect x="6" y="1" width="18" height="6" fill="#41a5ee"/><rect x="6" y="7" width="18" height="6" fill="#2b7cd3"/><rect x="6" y="13" width="18" height="6" fill="#185abd"/><rect x="6" y="19" width="18" height="5" fill="#103f91"/><rect x="0" y="6" width="12" height="12" fill="#1a5cb8"/><path d="M2.500 8.500l1.500 7 2-5 2 5 1.500-7" fill="none" stroke="#fff" stroke-width="1"/></svg>
                <div class="absolute bottom-[-2px] left-[19px] w-[6px] h-[3px] rounded-full bg-[#777]"></div>
            </div>
            <!-- settings -->
            <div class="relative w-[43.900px] h-[38px] flex items-center justify-center">
                <svg class="w-6 h-6" viewBox="0 0 24 24"><circle cx="12" cy="12" r="10.300" fill="none" stroke="#6e7a86" stroke-width="3.400" stroke-dasharray="5 3.090"/><circle cx="12" cy="12" r="8.500" fill="#7d8894"/><circle cx="12" cy="12" r="5.500" fill="#dfe6f3"/><circle cx="12" cy="12" r="4.500" fill="#1468b8"/></svg>
                <div class="absolute bottom-[-2px] left-[19px] w-[6px] h-[3px] rounded-full bg-[#777]"></div>
            </div>
        </div>

        <!-- tray -->
        <div class="ml-auto flex items-center pr-[18px] shrink-0">
            <svg class="w-3 h-2 shrink-0" viewBox="0 0 12 8"><path d="M1 7l5-5.500L11 7" fill="none" stroke="#222" stroke-width="1.200"/></svg>
            <svg class="ml-[10px] w-4 h-4 shrink-0" viewBox="0 0 16 16"><path d="M4 12a3 3 0 0 1-.5-6A4.500 4.500 0 0 1 12 5.500a3.300 3.300 0 0 1 1 6.500z" fill="#c8ccd2" stroke="#333" stroke-width="1"/></svg>
            <svg class="ml-2 w-4 h-4 shrink-0" viewBox="0 0 16 16"><path d="M4 0l2.500 2L4 4 1.500 2zM11 0l2.500 2L11 4 8.500 2zM4 4l2.500 2L4 8 1.500 6zM11 4l2.500 2L11 8 8.500 6z" fill="#222"/><rect x="0" y="8" width="8" height="8" fill="#d71920"/><text x="2" y="15" font-size="7.500" font-weight="700" fill="#fff" font-family="Liberation Sans, sans-serif">5</text></svg>
            <div class="ml-2 w-9 flex flex-col items-center leading-[16px] shrink-0">
                <span>ENG</span>
                <span>US</span>
            </div>
            <svg class="ml-3 w-4 h-4 shrink-0" viewBox="0 0 16 16"><path d="M.5 5.500a10.500 10.500 0 0 1 15 0M2.800 8a7.200 7.200 0 0 1 10.400 0M5 10.500a4 4 0 0 1 6 0" fill="none" stroke="#222" stroke-width="1"/><circle cx="8" cy="13" r="1.200" fill="#222"/></svg>
            <svg class="ml-[7px] w-4 h-4 shrink-0" viewBox="0 0 16 16"><path d="M1 6h3l4-3.500v11L4 10H1z" fill="none" stroke="#222"/><path d="M10 5.500a4 4 0 0 1 0 5" fill="none" stroke="#222"/><path d="M12 3.500a7 7 0 0 1 0 9" fill="none" stroke="#aaa"/></svg>
            <div class="ml-[6px] w-[70px] flex flex-col items-end leading-[17px] shrink-0">
                <span>5:37 PM</span>
                <span>2022-12-13</span>
            </div>
            <div class="ml-[10px] w-[19px] h-[19px] rounded-full bg-[#0b5aa5] text-white text-[10px] font-semibold flex items-center justify-center shrink-0">23</div>
        </div>
    </div>
</div>
</body>
</html>
